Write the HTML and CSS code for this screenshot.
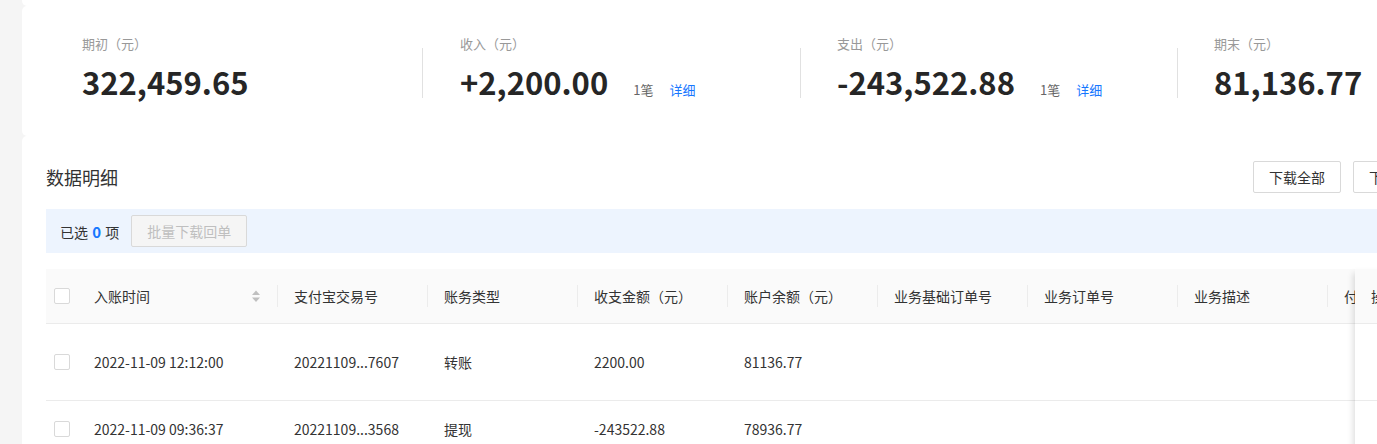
FILE: index.html
```html
<!DOCTYPE html>
<html lang="zh-CN">
<head>
<meta charset="utf-8">
<title>数据明细</title>
<link rel="stylesheet" href="styles.css">
</head>
<body>
<div class="page">
  <div class="stub"></div>
  <section class="card summary">
    <div class="stat stat-first">
      <div class="stat-label">期初（元）</div>
      <div class="stat-line"><span class="stat-value">322,459.65</span></div>
    </div>
    <div class="divider"></div>
    <div class="stat stat-2">
      <div class="stat-label">收入（元）</div>
      <div class="stat-line"><span class="stat-value">+2,200.00</span><span class="count">1笔</span><a class="link">详细</a></div>
    </div>
    <div class="divider"></div>
    <div class="stat stat-3">
      <div class="stat-label">支出（元）</div>
      <div class="stat-line"><span class="stat-value">-243,522.88</span><span class="count">1笔</span><a class="link">详细</a></div>
    </div>
    <div class="divider"></div>
    <div class="stat stat-4">
      <div class="stat-label">期末（元）</div>
      <div class="stat-line"><span class="stat-value">81,136.77</span></div>
    </div>
  </section>

  <section class="card detail">
    <div class="detail-head">
      <h2 class="detail-title">数据明细</h2>
      <div class="actions">
        <button class="btn">下载全部</button>
        <button class="btn">下载查询结果</button>
      </div>
    </div>
    <div class="selbar">
      <span class="sel-text">已选 <b class="sel-num">0</b> 项</span>
      <button class="btn btn-disabled" disabled>批量下载回单</button>
    </div>

    <div class="table">
      <div class="scroll">
        <div class="row head">
          <div class="cell check"><span class="box"></span></div>
          <div class="cell hcell"><span class="hlabel">入账时间</span><svg class="sorter" width="8" height="13" viewBox="0 0 8 13"><path d="M0 5 L4 0.5 L8 5 Z" fill="#bfbfbf"/><path d="M0 7.5 L8 7.5 L4 12 Z" fill="#bfbfbf"/></svg><span class="sep"></span></div>
          <div class="cell hcell"><span class="hlabel">支付宝交易号</span><span class="sep"></span></div>
          <div class="cell hcell"><span class="hlabel">账务类型</span><span class="sep"></span></div>
          <div class="cell hcell"><span class="hlabel">收支金额（元）</span><span class="sep"></span></div>
          <div class="cell hcell"><span class="hlabel">账户余额（元）</span><span class="sep"></span></div>
          <div class="cell hcell"><span class="hlabel">业务基础订单号</span><span class="sep"></span></div>
          <div class="cell hcell"><span class="hlabel">业务订单号</span><span class="sep"></span></div>
          <div class="cell hcell"><span class="hlabel">业务描述</span><span class="sep"></span></div>
          <div class="cell hcell"><span class="hlabel">付款方信息</span><span class="sep"></span></div>
        </div>
        <div class="row body tall">
          <div class="cell check"><span class="box"></span></div>
          <div class="cell">2022-11-09 12:12:00</div>
          <div class="cell">20221109...7607</div>
          <div class="cell">转账</div>
          <div class="cell">2200.00</div>
          <div class="cell">81136.77</div>
          <div class="cell"></div>
          <div class="cell"></div>
          <div class="cell"></div>
          <div class="cell"></div>
        </div>
        <div class="row body">
          <div class="cell check"><span class="box"></span></div>
          <div class="cell">2022-11-09 09:36:37</div>
          <div class="cell">20221109...3568</div>
          <div class="cell">提现</div>
          <div class="cell">-243522.88</div>
          <div class="cell">78936.77</div>
          <div class="cell"></div>
          <div class="cell"></div>
          <div class="cell"></div>
          <div class="cell"></div>
        </div>
      </div>
      <div class="fixed">
        <div class="frow head"><span class="hlabel">操作</span></div>
        <div class="frow body tall"></div>
        <div class="frow body"></div>
      </div>
    </div>
  </section>
</div>
</body>
</html>
```

FILE: styles.css
```css
html, body {
  margin: 0;
  padding: 0;
  overflow: hidden;
  background: #f5f5f5;
}

body {
  font-family: "Noto Sans CJK SC", "Open Sans", sans-serif;
  font-size: 14px;
  color: #333;
}

.page {
  padding-left: 22px;
  width: 1471px;
}

.stub {
  height: 6px;
  background: #fff;
  border-radius: 0 0 5px 5px;
}

.card {
  background: #fff;
  border-radius: 5px;
}

/* ---------- summary ---------- */
.summary {
  height: 130px;
  box-sizing: border-box;
  padding: 28px 0 0 60px;
  display: flex;
  align-items: flex-start;
}

.stat { box-sizing: border-box; }
.stat-first { width: 340px; }
.stat-2 { width: 377px; padding-left: 37px; }
.stat-3 { width: 376px; padding-left: 36px; }
.stat-4 { padding-left: 36px; }

.divider {
  width: 1px;
  height: 50px;
  background: #e1e1e1;
  margin-top: 14px;
  flex: 0 0 1px;
}

.stat-label {
  font-size: 13px;
  line-height: 20px;
  color: #999;
}

.stat-line {
  display: flex;
  align-items: baseline;
  margin-top: 8px;
}

.stat-value {
  font-size: 31px;
  line-height: 40px;
  font-weight: 700;
  color: #262626;
}

.count {
  font-size: 13px;
  color: #666;
  margin-left: 25px;
}

.link {
  font-size: 13px;
  color: #1677ff;
  margin-left: 16px;
  cursor: pointer;
}

/* ---------- detail ---------- */
.detail {
  padding: 25px 24px 0;
  min-height: 400px;
}

.detail-head {
  display: flex;
  align-items: center;
  justify-content: space-between;
  height: 32px;
}

.detail-title {
  margin: 0;
  font-size: 18px;
  font-weight: 400;
  line-height: 32px;
  color: #333;
}

.actions {
  display: flex;
  gap: 12px;
}

.btn {
  height: 32px;
  padding: 0 15px;
  border: 1px solid #d9d9d9;
  border-radius: 2px;
  background: #fff;
  font-family: inherit;
  font-size: 14px;
  color: #333;
  line-height: 30px;
}

.btn-disabled {
  width: 116px;
  padding: 0;
  background: #f5f5f5;
  color: #bfbfbf;
  margin-left: 12px;
}

.selbar {
  margin-top: 16px;
  height: 44px;
  background: #edf4fe;
  display: flex;
  align-items: center;
  padding-left: 14px;
}

.sel-text {
  font-size: 14px;
  color: #333;
}

.sel-num {
  color: #1677ff;
  font-weight: 700;
  font-size: 15px;
  margin: 0 1px;
}

/* ---------- table ---------- */
.table {
  margin-top: 16px;
  display: flex;
}

.scroll {
  flex: 0 0 1309px;
  overflow: hidden;
}

.row {
  display: grid;
  grid-template-columns: 32px 200px repeat(8, 150px);
  width: 1432px;
  border-bottom: 1px solid #ebebeb;
}

.row.head, .frow.head {
  height: 55px;
  background: #fafafa;
}

.row.body, .frow.body {
  height: 56px;
}

.row.tall, .frow.tall {
  height: 77px;
}

.row, .frow {
  box-sizing: border-box;
}

.cell {
  display: flex;
  align-items: center;
  padding-left: 16px;
  font-size: 14px;
  color: #333;
  white-space: nowrap;
  overflow: hidden;
}

.cell.check {
  padding-left: 8px;
}

.box {
  width: 16px;
  height: 16px;
  box-sizing: border-box;
  border: 1px solid #d9d9d9;
  border-radius: 2px;
  background: #fff;
}

.hcell .hlabel {
  flex: 1 1 auto;
}

.hlabel {
  font-size: 14px;
  color: #333;
}

.sorter {
  flex: 0 0 8px;
  margin-right: 17px;
}

.sep {
  flex: 0 0 1px;
  width: 1px;
  height: 22px;
  background: #ececec;
}

.fixed {
  flex: 0 0 114px;
  position: relative;
  z-index: 1;
  background: #fff;
  box-shadow: -6px 0 6px -4px rgba(0, 0, 0, 0.13);
}

.frow {
  display: flex;
  align-items: center;
  padding-left: 16px;
  border-bottom: 1px solid #ebebeb;
}
```
